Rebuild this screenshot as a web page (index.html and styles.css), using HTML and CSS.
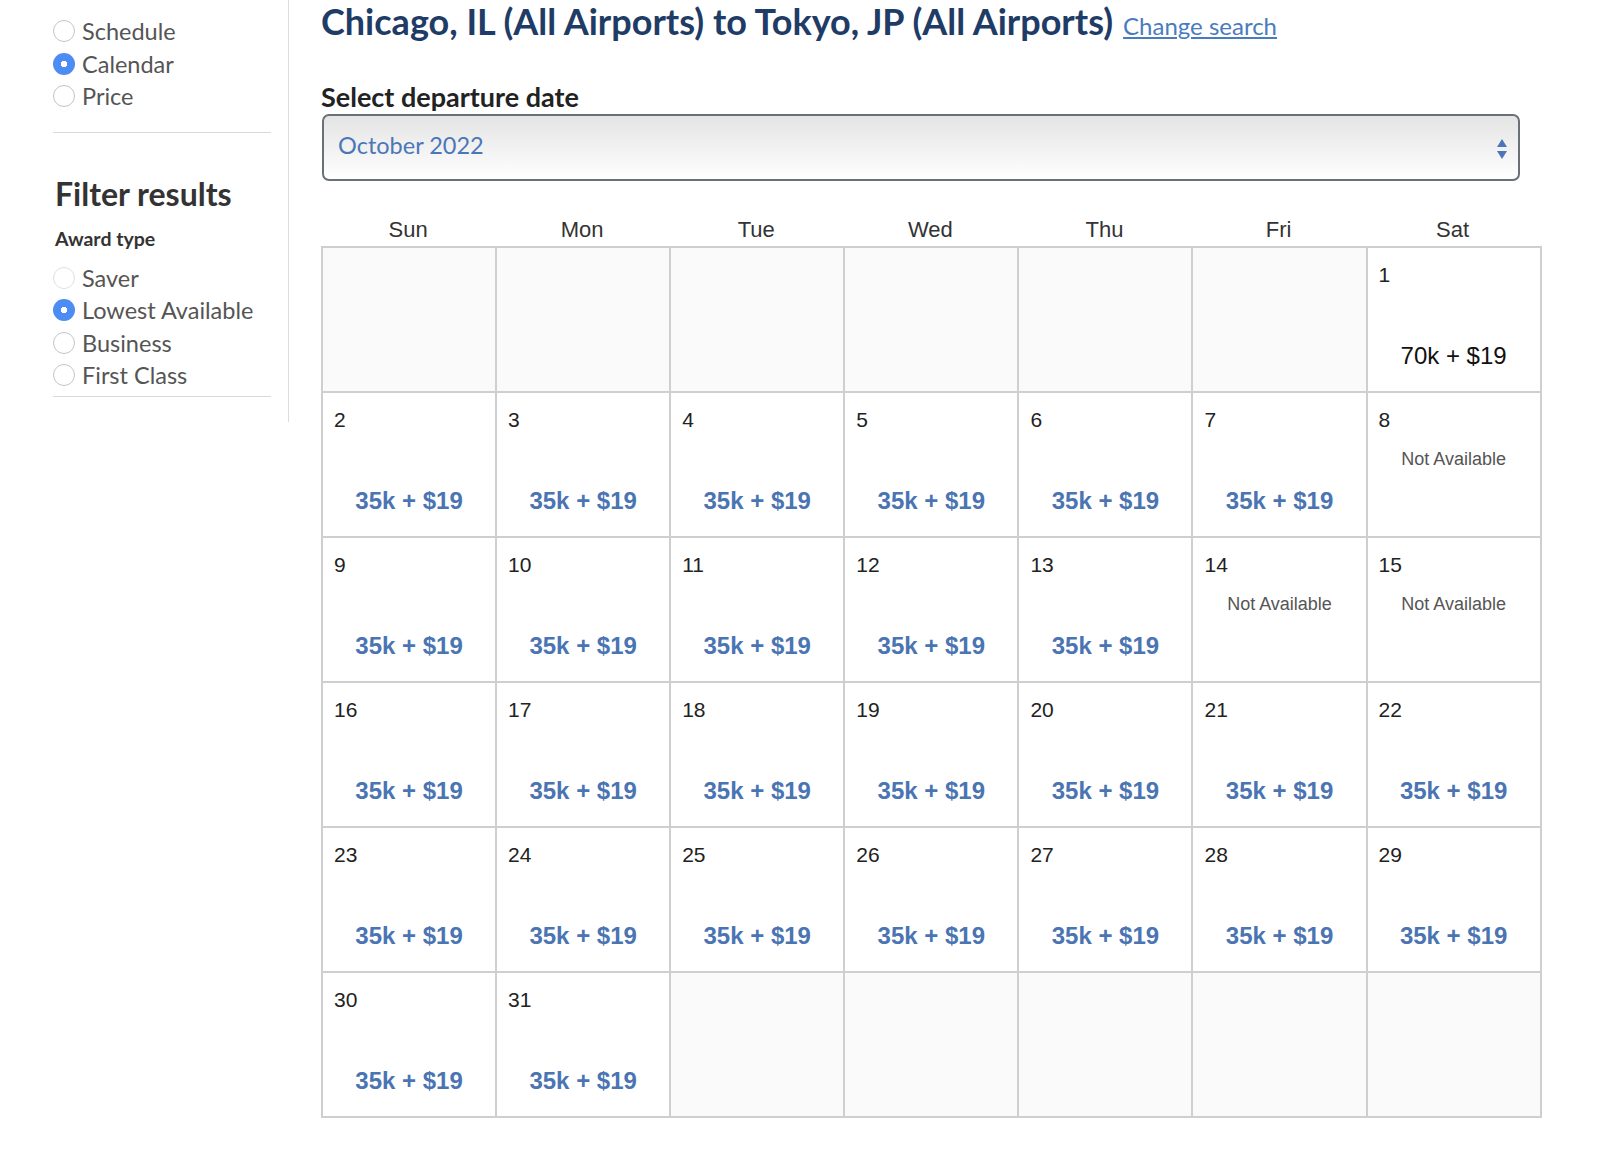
FILE: index.html
```html
<!DOCTYPE html>
<html lang="en">
<head>
    <meta charset="UTF-8">
    <meta name="viewport" content="width=device-width, initial-scale=1.0">
    <title>Award calendar</title>
    <link rel="stylesheet" href="styles.css">
</head>
<body>
    <div class="page">
        <div class="sidebar">
            <div class="radio-group view-group">
                <label class="radio"><span class="dot"></span>Schedule</label>
                <label class="radio"><span class="dot on"></span>Calendar</label>
                <label class="radio"><span class="dot"></span>Price</label>
            </div>
            <h2 class="filter-title">Filter results</h2>
            <h3 class="filter-sub">Award type</h3>
            <div class="radio-group award-group">
                <label class="radio"><span class="dot faint"></span>Saver</label>
                <label class="radio"><span class="dot on"></span>Lowest Available</label>
                <label class="radio"><span class="dot"></span>Business</label>
                <label class="radio"><span class="dot"></span>First Class</label>
            </div>
        </div>

        <div class="main">
            <div class="title-row">
                <h1>Chicago, IL (All Airports) to Tokyo, JP (All Airports)</h1>
                <a href="#" class="change-link">Change search</a>
            </div>

            <div class="select-label">Select departure date</div>
            <div class="month-select">
                <span>October 2022</span>
                <svg class="arrows" width="12" height="22" viewBox="0 0 12 22">
                    <path d="M6 1 L11 9 L1 9 Z" fill="#4a77b8"/>
                    <path d="M1 13 L11 13 L6 21 Z" fill="#4a77b8"/>
                </svg>
            </div>

            <div class="weekdays">
                <div>Sun</div><div>Mon</div><div>Tue</div><div>Wed</div><div>Thu</div><div>Fri</div><div>Sat</div>
            </div>
            <div class="calendar" id="calendar"></div>
        </div>
    </div>

    <script>
        // days with no seats
        const notAvailable = [8, 14, 15];
        const calendar = document.getElementById('calendar');
        const firstWeekday = 6;
        const daysInMonth = 31;

        for (let i = 0; i < 42; i++) {
            const day = i - firstWeekday + 1;
            const cell = document.createElement('div');
            cell.className = 'day';

            if (day < 1 || day > daysInMonth) {
                cell.classList.add('empty');
            } else {
                let html = '<div class="num">' + day + '</div>';
                if (notAvailable.includes(day)) {
                    html += '<div class="na">Not Available</div>';
                } else if (day === 1) {
                    html += '<div class="price plain">70k + $19</div>';
                } else {
                    html += '<div class="price">35k + $19</div>';
                }
                cell.innerHTML = html;
            }
            calendar.appendChild(cell);
        }
    </script>
</body>
</html>
```

FILE: styles.css
```css
* {
    box-sizing: border-box;
}

body {
    margin: 0;
    background: #fff;
    font-family: Lato, "Open Sans", sans-serif;
}

.page {
    display: flex;
    align-items: flex-start;
}

.sidebar {
    width: 289px;
    height: 422px;
    padding: 15px 17px 0 53px;
    border-right: 1px solid #dcdcdc;
}

.radio-group {
    display: flex;
    flex-direction: column;
}

.view-group {
    padding-bottom: 19px;
    border-bottom: 1px solid #d8d8d8;
}

.award-group {
    padding-bottom: 4px;
    border-bottom: 1px solid #d8d8d8;
}

.radio {
    display: flex;
    align-items: center;
    height: 32.5px;
    font-size: 23.5px;
    color: #555;
}

.dot {
    width: 22px;
    height: 22px;
    border-radius: 50%;
    border: 1.5px solid #c4c4c4;
    background: #fff;
    margin-right: 7px;
    flex-shrink: 0;
}

.dot.faint {
    border-color: #e0e0e0;
}

.dot.on {
    border: none;
    background: radial-gradient(circle, #fff 0 3px, #4d8cf5 3.5px);
}

.filter-title {
    margin: 41px 0 0 2px;
    font-size: 32px;
    line-height: 40px;
    font-weight: 700;
    color: #333;
}

.filter-sub {
    margin: 12px 0 10px 2px;
    font-size: 19.5px;
    line-height: 26px;
    font-weight: 700;
    color: #333;
}

.main {
    padding-left: 32px;
}

.title-row {
    display: flex;
    align-items: baseline;
    gap: 10px;
    margin-top: 1px;
}

.title-row h1 {
    margin: 0;
    font-size: 36px;
    font-weight: 700;
    color: #1f3c66;
    line-height: 40px;
}

.change-link {
    font-size: 24px;
    color: #4a7bbf;
    text-decoration: underline;
}

.select-label {
    margin-top: 40px;
    font-size: 27px;
    font-weight: 700;
    color: #222;
    line-height: 32px;
}

.month-select {
    width: 1198px;
    height: 67px;
    margin-top: 1px;
    margin-left: 1px;
    border: 2px solid #6b7078;
    border-radius: 7px;
    background: linear-gradient(#e4e4e4, #f4f4f4 60%, #fff);
    display: flex;
    align-items: center;
    justify-content: space-between;
    padding: 0 10px 0 14px;
}

.month-select span {
    font-size: 23.5px;
    color: #4a77b8;
    margin-top: -6px;
}

.arrows {
    margin-top: 2px;
}

.weekdays {
    display: grid;
    grid-template-columns: repeat(7, 174.1px);
    margin-top: 36px;
    font-family: "Liberation Sans", Arial, sans-serif;
    font-size: 22px;
    color: #333;
    text-align: center;
    line-height: 26px;
    height: 29px;
}

.calendar {
    display: grid;
    grid-template-columns: repeat(7, 174.1px);
    grid-auto-rows: 145px;
    width: 1221px;
    border-top: 2px solid #cfcfcf;
    border-left: 2px solid #cfcfcf;
    font-family: "Liberation Sans", Arial, sans-serif;
}

.day {
    display: flex;
    flex-direction: column;
    border-right: 2px solid #cfcfcf;
    border-bottom: 2px solid #cfcfcf;
    background: #fff;
}

.day.empty {
    background: #fafafa;
}

.num {
    margin: 13px 0 0 11px;
    font-size: 21px;
    line-height: 28px;
    color: #222;
}

.na {
    margin-top: 15px;
    font-size: 18px;
    line-height: 20px;
    color: #555;
    text-align: center;
}

.price {
    margin-top: auto;
    margin-bottom: 20px;
    font-size: 24px;
    line-height: 30px;
    font-weight: 700;
    color: #4a74b2;
    text-align: center;
}

.price.plain {
    font-weight: 400;
    color: #111;
}
```
